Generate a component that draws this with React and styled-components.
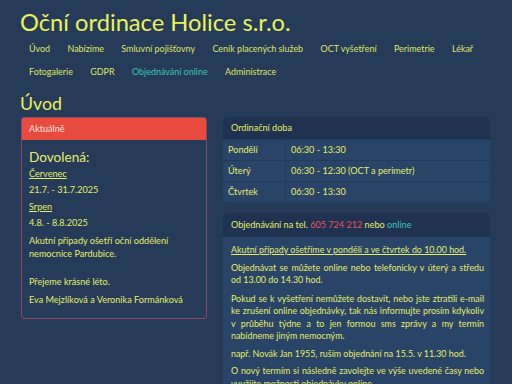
import React from "react";
import styled, { createGlobalStyle } from "styled-components";

const Global = createGlobalStyle`
  html, body { margin: 0; padding: 0; }
  body {
    background: #253b57;
    font-family: Lato, "Noto Sans", sans-serif;
    color: #e3ee6c;
    width: 512px;
    height: 384px;
    overflow: hidden;
  }
`;

const Page = styled.div`
  padding: 0 14px 0 13px;
`;

const Title = styled.h1`
  margin: 0;
  padding: 7px 0 0 7px;
  font-size: 23.7px;
  font-weight: 400;
  line-height: 30px;
  color: #e8f25e;
`;

const Nav = styled.nav`
  display: flex;
  flex-wrap: wrap;
  padding: 0 0 0 7.3px;
`;

const NavLink = styled.a`
  display: block;
  padding: 5px 8.7px;
  line-height: 13px;
  font-size: 8.95px;
  color: ${(p) => (p.$active ? "#3ec2b6" : "#dbe66a")};
  text-decoration: none;
`;

const Heading = styled.h2`
  margin: 0;
  padding: 9px 0 0 7px;
  font-size: 17.8px;
  font-weight: 400;
  line-height: 22px;
  color: #e8f25e;
`;

const Row = styled.div`
  display: grid;
  grid-template-columns: 202px 283px;
  margin-top: 2.5px;
  align-items: start;
`;

const Col = styled.div`
  padding: 0 8px;
  display: flex;
  flex-direction: column;
  gap: 11px;
`;

const AlertPanel = styled.div`
  border: 1px solid #8a4862;
  border-radius: 3px;
  overflow: hidden;
`;

const AlertHead = styled.div`
  background: #e84b3e;
  color: #f7e4e0;
  font-size: 9.1px;
  height: 22px;
  line-height: 22px;
  padding: 0 7px;
`;

const AlertBody = styled.div`
  padding: 9px 7px 12px;
  font-size: 9.1px;
  line-height: 12.5px;
`;

const Big = styled.div`
  font-size: 13.6px;
  line-height: 16px;
  margin-bottom: 3.5px;
`;

const P = styled.p`
  margin: 0 0 ${(p) => p.$mb ?? 4}px;
  text-align: ${(p) => (p.$justify ? "justify" : "left")};
`;

const U = styled.span`
  text-decoration: underline;
`;

const Panel = styled.div`
  border-radius: 4px;
  overflow: hidden;
  background: #2a4467;
`;

const PanelHead = styled.div`
  background: #1f3350;
  font-size: 9.1px;
  height: ${(p) => p.$h || 22}px;
  line-height: ${(p) => p.$h || 22}px;
  padding: 0 8px;
`;

const Table = styled.table`
  width: 100%;
  border-collapse: collapse;
  font-size: 9.1px;
`;

const Td = styled.td`
  height: 20px;
  padding: 0 4px 0 5px;
  border-top: 1px solid #223a5b;
  width: ${(p) => p.$w || "auto"};
  &:first-child { border-right: 1px solid #223a5b; }
`;

const Red = styled.span`
  color: #e8525f;
`;
const Teal = styled.span`
  color: #3ec2c0;
`;

const PanelBody = styled.div`
  padding: 7px 6px 4px 8px;
  font-size: 8.9px;
  line-height: 12.5px;
`;

const navItems = ["Úvod", "Nabízíme", "Smluvní pojišťovny", "Ceník placených služeb", "OCT vyšetření", "Perimetrie", "Lékař", "Fotogalerie", "GDPR", "Objednávání online", "Administrace"];

export default function App() {
  return (
    <Page>
      <Global />
      <Title>Oční ordinace Holice s.r.o.</Title>
      <Nav>
        {navItems.map((n) => (
          <NavLink key={n} $active={n === "Objednávání online"}>{n}</NavLink>
        ))}
      </Nav>
      <Heading>Úvod</Heading>
      <Row>
        <Col>
          <AlertPanel>
            <AlertHead>Aktuálně</AlertHead>
            <AlertBody>
              <Big>Dovolená:</Big>
              <P $mb={3.5}><U>Červenec</U></P>
              <P $mb={4}>21.7. - 31.7.2025</P>
              <P $mb={3.5}><U>Srpen</U></P>
              <P $mb={6}>4.8. - 8.8.2025</P>
              <P $mb={15.5}>Akutní případy ošetří oční oddělení<br />nemocnice Pardubice.</P>
              <P $mb={5.5}>Přejeme krásné léto.</P>
              <P $mb={0}>Eva Mejzlíková a Veronika Formánková</P>
            </AlertBody>
          </AlertPanel>
        </Col>
        <Col>
          <Panel>
            <PanelHead>Ordinační doba</PanelHead>
            <Table>
              <tbody>
                <tr><Td $w="53px">Pondělí</Td><Td>06:30 - 13:30</Td></tr>
                <tr><Td $w="53px">Úterý</Td><Td>06:30 - 12:30 (OCT a perimetr)</Td></tr>
                <tr><Td $w="53px">Čtvrtek</Td><Td>06:30 - 13:30</Td></tr>
              </tbody>
            </Table>
          </Panel>
          <Panel>
            <PanelHead $h={24}>Objednávání na tel. <Red>605 724 212</Red> nebo <Teal>online</Teal></PanelHead>
            <PanelBody>
              <P $mb={5.5}><U>Akutní případy ošetříme v pondělí a ve čtvrtek do 10.00 hod.</U></P>
              <P $mb={6} $justify>Objednávat se můžete online nebo telefonicky v úterý a středu od 13.00 do 14.30 hod.</P>
              <P $mb={5.5} $justify>Pokud se k vyšetření nemůžete dostavit, nebo jste ztratili e&#8209;mail ke zrušení online objednávky, tak nás informujte prosím kdykoliv v průběhu týdne a to jen formou sms zprávy a my termín nabídneme jiným nemocným.</P>
              <P $mb={4.5}>např. Novák Jan 1955, ruším objednání na 15.5. v 11.30 hod.</P>
              <P $mb={6} $justify>O nový termím si následně zavolejte ve výše uvedené časy nebo využijte možnosti objednávky online.</P>
            </PanelBody>
          </Panel>
        </Col>
      </Row>
    </Page>
  );
}
